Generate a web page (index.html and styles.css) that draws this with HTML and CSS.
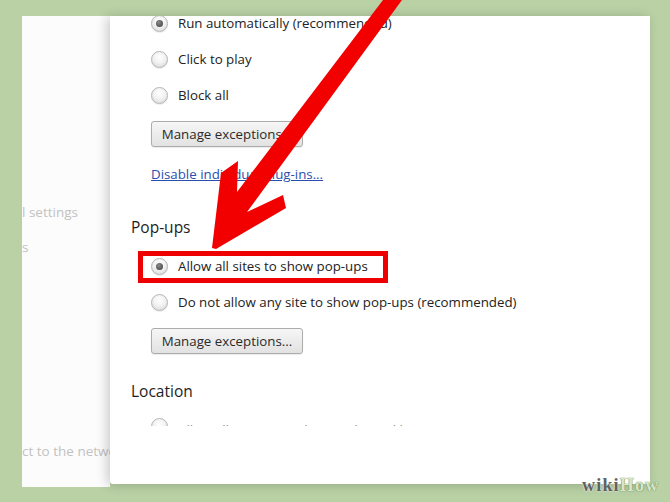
FILE: index.html
```html
<!DOCTYPE html>
<html lang="en">
<head>
<meta charset="utf-8">
<title>Content settings</title>
<link rel="stylesheet" href="styles.css">
</head>
<body>
<div class="page">
  <div class="frame">
    <div class="side">
      <div class="side-text first">l settings</div>
      <div class="side-text second">s</div>
      <div class="side-text third">ct to the network</div>
    </div>
    <div class="dialog">
      <div class="viewport">
        <div class="content">
          <div class="opt"><span class="radio checked"></span><span class="label">Run automatically (recommended)</span></div>
          <div class="opt"><span class="radio"></span><span class="label">Click to play</span></div>
          <div class="opt"><span class="radio"></span><span class="label">Block all</span></div>
          <button class="btn btn-first">Manage exceptions...</button>
          <a class="link" href="#">Disable individual plug-ins...</a>
          <h2 class="heading heading-popups">Pop-ups</h2>
          <div class="opt highlight"><span class="radio checked"></span><span class="label">Allow all sites to show pop-ups</span></div>
          <div class="opt"><span class="radio"></span><span class="label">Do not allow any site to show pop-ups (recommended)</span></div>
          <button class="btn">Manage exceptions...</button>
          <h2 class="heading heading-location">Location</h2>
          <div class="opt partial"><span class="radio"></span><span class="label">Allow all sites to track your physical location</span></div>
        </div>
      </div>
    </div>
  </div>
  <svg class="arrow" width="670" height="502" viewBox="0 0 670 502" aria-hidden="true">
    <polygon fill="#f20000" points="212,248 221,173 238,161 237,192 383,0 402,0 247,212 283,195 286,208 216,249"/>
  </svg>
  <div class="logo"><span class="wiki">wiki</span><span class="how">How</span></div>
</div>
</body>
</html>
```

FILE: styles.css
```css
html, body {
  margin: 0;
  padding: 0;
}
body {
  background: #b9d1a5;
  width: 670px;
  height: 502px;
  overflow: hidden;
  font-family: "Open Sans", "Noto Sans", sans-serif;
}
.page {
  position: relative;
  width: 670px;
  height: 502px;
  padding: 16px 20px 0 22px;
  box-sizing: border-box;
}
.frame {
  display: flex;
  align-items: flex-start;
  width: 628px;
}
.side {
  width: 88px;
  height: 471px;
  background: #fcfcfc;
  overflow: hidden;
  display: flex;
  flex-direction: column;
  flex-shrink: 0;
}
.side-text {
  font-size: 13.5px;
  line-height: 20px;
  color: #c2c2c2;
  white-space: nowrap;
}
.side-text.first { margin-top: 186px; }
.side-text.second { margin-top: 15px; }
.side-text.third { margin-top: 184px; }
.dialog {
  flex: 1;
  height: 468px;
  background: #ffffff;
  position: relative;
  z-index: 1;
  box-shadow: -3px 1px 12px rgba(0, 0, 0, 0.2);
  border-radius: 0 0 0 3px;
}
.viewport {
  height: 410px;
  overflow: hidden;
  padding-left: 21px;
}
.content {
  margin-top: -11px;
  display: flex;
  flex-direction: column;
  align-items: flex-start;
  color: #222222;
  font-size: 13.3px;
}
.opt {
  position: relative;
  display: flex;
  align-items: center;
  height: 36px;
  padding-left: 20px;
  gap: 10px;
  white-space: nowrap;
}
.radio {
  width: 15px;
  height: 15px;
  border-radius: 50%;
  border: 1px solid #b4b4b4;
  background: radial-gradient(circle at 50% 35%, #ffffff 0%, #f2f2f2 45%, #d4d4d4 100%);
  box-shadow: 0 1px 1px rgba(0, 0, 0, 0.08);
  position: relative;
  flex-shrink: 0;
}
.radio.checked::after {
  content: "";
  position: absolute;
  left: 4px;
  top: 4px;
  width: 7px;
  height: 7px;
  border-radius: 50%;
  background: radial-gradient(circle at 40% 35%, #8a8a8a 0%, #4a4a4a 80%);
}
.label {
  line-height: 20px;
}
.opt.partial .label {
  padding-top: 8px;
  color: #8a8a8a;
}
.btn {
  margin: 8px 0 0 20px;
  width: 152px;
  height: 26px;
  padding: 0;
  border: 1px solid #acacac;
  border-radius: 3px;
  background: linear-gradient(#f6f6f6, #e2e2e2);
  box-shadow: 0 1px 1px rgba(0, 0, 0, 0.08);
  font-family: "Open Sans", "Noto Sans", sans-serif;
  font-size: 13.3px;
  color: #2a2a2a;
}
.link {
  margin: 17px 0 0 20px;
  line-height: 20px;
  color: #2a4fae;
  text-decoration: underline;
  font-size: 13.3px;
}
.heading {
  margin: 0;
  font-weight: normal;
  font-size: 15.5px;
  line-height: 22px;
  color: #1e1e1e;
}
.heading-popups { margin-top: 32px; }
.opt.highlight { margin-top: 10px; }
.heading-location { margin-top: 26px; }
.opt.partial { margin-top: 6px; }
.opt.highlight::after {
  content: "";
  position: absolute;
  left: 7px;
  top: 3px;
  width: 250px;
  height: 32px;
  border: 5px solid #ee0000;
  box-sizing: border-box;
}
.arrow {
  position: absolute;
  left: 0;
  top: 0;
  z-index: 5;
  pointer-events: none;
}
.logo {
  position: absolute;
  left: 582px;
  top: 475px;
  z-index: 6;
  font-family: "Liberation Serif", "DejaVu Serif", serif;
  font-weight: bold;
  font-size: 18px;
  letter-spacing: 1.2px;
  line-height: 20px;
}
.wiki {
  color: #606060;
  text-shadow: 0 0 2px #eef3ea, 0 0 1px #ffffff;
}
.how {
  color: #d6e6c9;
  text-shadow: 0 0 1px #6c8a58, 0 0 1px #6c8a58;
}
```
